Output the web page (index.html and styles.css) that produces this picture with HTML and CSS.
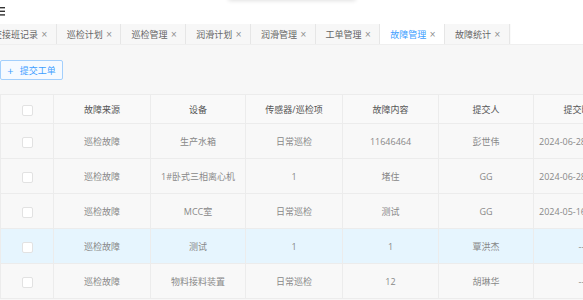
FILE: index.html
```html
<!DOCTYPE html>
<html lang="zh-CN">
<head>
    <meta charset="UTF-8">
    <meta name="viewport" content="width=device-width, initial-scale=1.0">
    <title>故障管理</title>
    <link rel="stylesheet" href="styles.css">
</head>
<body>
    <div class="header">
        <div class="menu-icon">
            <svg width="10" height="9" viewBox="0 0 10 9">
                <rect x="0" y="0" width="10" height="1.4" fill="#333"/>
                <rect x="0" y="3.6" width="10" height="1.4" fill="#333"/>
                <rect x="0" y="7.2" width="10" height="1.4" fill="#333"/>
            </svg>
        </div>
        <div class="dropdown-shadow"></div>
    </div>

    <div class="tabs">
        <div class="tab first">交接班记录<span class="close">×</span></div>
        <div class="tab">巡检计划<span class="close">×</span></div>
        <div class="tab">巡检管理<span class="close">×</span></div>
        <div class="tab">润滑计划<span class="close">×</span></div>
        <div class="tab">润滑管理<span class="close">×</span></div>
        <div class="tab">工单管理<span class="close">×</span></div>
        <div class="tab active">故障管理<span class="close">×</span></div>
        <div class="tab">故障统计<span class="close">×</span></div>
    </div>

    <div class="container">
        <div class="toolbar">
            <button class="btn-add"><span class="plus">+</span>提交工单</button>
        </div>

        <table>
            <colgroup>
                <col class="col-check">
                <col class="col-a">
                <col class="col-b">
                <col class="col-a">
                <col class="col-c">
                <col class="col-b">
                <col class="col-c">
            </colgroup>
            <thead>
                <tr>
                    <th><span class="checkbox"></span></th>
                    <th>故障来源</th>
                    <th>设备</th>
                    <th>传感器/巡检项</th>
                    <th>故障内容</th>
                    <th>提交人</th>
                    <th>提交时间</th>
                </tr>
            </thead>
            <tbody>
                <tr>
                    <td><span class="checkbox"></span></td>
                    <td>巡检故障</td>
                    <td>生产水箱</td>
                    <td>日常巡检</td>
                    <td>11646464</td>
                    <td>彭世伟</td>
                    <td>2024-06-28 10:25:36</td>
                </tr>
                <tr>
                    <td><span class="checkbox"></span></td>
                    <td>巡检故障</td>
                    <td>1#卧式三相离心机</td>
                    <td>1</td>
                    <td>堵住</td>
                    <td>GG</td>
                    <td>2024-06-28 09:12:04</td>
                </tr>
                <tr>
                    <td><span class="checkbox"></span></td>
                    <td>巡检故障</td>
                    <td>MCC室</td>
                    <td>日常巡检</td>
                    <td>测试</td>
                    <td>GG</td>
                    <td>2024-05-16 15:40:22</td>
                </tr>
                <tr class="hover">
                    <td><span class="checkbox"></span></td>
                    <td>巡检故障</td>
                    <td>测试</td>
                    <td>1</td>
                    <td>1</td>
                    <td>覃洪杰</td>
                    <td>--</td>
                </tr>
                <tr>
                    <td><span class="checkbox"></span></td>
                    <td>巡检故障</td>
                    <td>物料接料装置</td>
                    <td>日常巡检</td>
                    <td>12</td>
                    <td>胡琳华</td>
                    <td>--</td>
                </tr>
            </tbody>
        </table>
    </div>
</body>
</html>
```

FILE: styles.css
```css
body {
    font-family: "Open Sans", "Noto Sans CJK SC", sans-serif;
    margin: 0;
    padding: 0;
    background-color: #f7f7f7;
    width: 583px;
    height: 300px;
    overflow: hidden;
    color: #666;
}

.header {
    position: relative;
    height: 24px;
    background-color: white;
    display: flex;
    align-items: center;
}

.menu-icon {
    margin-left: -5px;
    margin-top: -1px;
    display: flex;
}

.dropdown-shadow {
    position: absolute;
    top: -12px;
    left: 228px;
    width: 128px;
    height: 12px;
    background: white;
    box-shadow: 0 1px 4px rgba(0, 0, 0, 0.12);
    border-radius: 3px;
}

.tabs {
    display: flex;
    height: 20px;
    background-color: white;
    border-bottom: 1px solid #efefef;
}

.tab {
    display: flex;
    align-items: center;
    padding: 0 8px 0 10px;
    background-color: #f7f7f7;
    border-right: 1px solid #e6e6e6;
    box-shadow: 1px 0 0 #fafafa;
    font-size: 9px;
    color: #666;
    white-space: nowrap;
}

.tab.first {
    margin-left: -17px;
}

.tab.active {
    background-color: white;
    color: #409eff;
}

.close {
    margin-left: 3px;
    color: #8a8a8a;
    font-family: "DejaVu Sans", sans-serif;
    font-size: 8px;
}

.container {
    padding-top: 15px;
}

.toolbar {
    display: flex;
    margin-bottom: 14px;
}

.btn-add {
    height: 20px;
    width: 63px;
    padding: 0;
    border: 1px solid #a3cffc;
    border-radius: 2px;
    background-color: #f6faff;
    color: #409eff;
    font-family: "Open Sans", "Noto Sans CJK SC", sans-serif;
    font-size: 9px;
    display: flex;
    align-items: center;
    justify-content: center;
}

.plus {
    font-size: 11px;
    margin-right: 6px;
    line-height: 1;
}

table {
    table-layout: fixed;
    width: 629px;
    border-collapse: collapse;
    background: #f8f8f8;
}

.col-check { width: 53px; }
.col-a { width: 97px; }
.col-b { width: 95px; }
.col-c { width: 96px; }

th, td {
    border: 1px solid #ececec;
    text-align: center;
    font-size: 9px;
    white-space: nowrap;
    overflow: hidden;
    padding: 0 4px;
}

th {
    height: 28px;
    font-weight: normal;
    color: #555;
    background-color: #f9f9f9;
}

td {
    height: 34px;
    color: #888;
}

tr.hover td {
    background-color: #e6f5fe;
}

.checkbox {
    display: inline-block;
    width: 9px;
    height: 9px;
    border: 1px solid #e2e2e2;
    border-radius: 2px;
    background: white;
    vertical-align: middle;
}
```
